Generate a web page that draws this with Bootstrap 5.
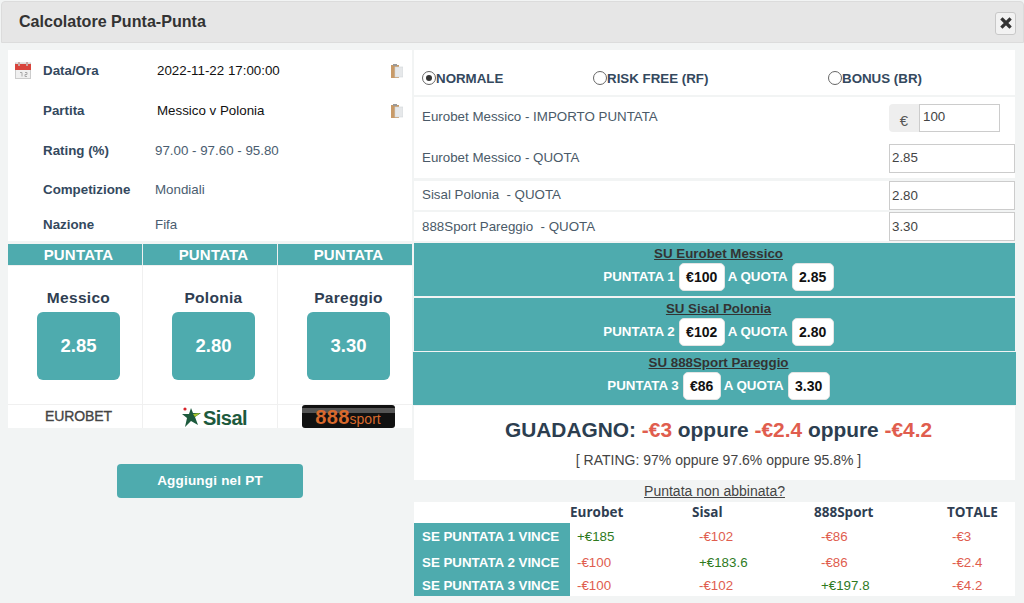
<!DOCTYPE html>
<html lang="it">
<head>
<meta charset="utf-8">
<title>Calcolatore Punta-Punta</title>
<link href="https://cdn.jsdelivr.net/npm/bootstrap@5.3.0/dist/css/bootstrap.min.css" rel="stylesheet">
<style>
html,body{height:603px;overflow:hidden}
body{background:#f2f4f4;font-family:"Liberation Sans",Arial,sans-serif;font-size:13.33px;color:#34495e;line-height:1.2}
.mhead{height:42px;margin:1px 0 0 1px;background:#e6e6e6;border:1px solid #dcdcdc;border-radius:4px 4px 0 0;padding:0 7px 0 17px}
.mhead h1{font-size:16.1px;font-weight:700;color:#333;margin:0}
.xbtn{width:21px;height:23px;padding:0;background:#f2f2f2;border:1px solid #c8c8c8;border-radius:3px;color:#333;display:flex;align-items:center;justify-content:center;margin-top:2px}
.cols{margin-top:7px;padding-left:8px;gap:2px}
.lcol{width:404px;flex:none}
.rcol{width:601px;flex:none}
.wbox{background:#fff}
.inf{display:flex;align-items:center;font-weight:700;color:#34495e;position:relative;padding-top:1px}
.inf .ik{position:absolute;left:7px;top:12px}
.inf .cp{position:absolute;left:383px;top:14px}
.inf .lb{margin-left:35px;width:112px;flex:none}
.inf .vl{font-weight:400;color:#4a5d70}
.inf .vd{font-weight:400;color:#111;margin-left:2px}
.h1r{height:40px}.h2r{height:40px}.h3r{height:41px}.h4r{height:37px}.h5r{height:33px}
.teal{background:#4eabae;color:#fff}
.pgrid{display:grid;grid-template-columns:134px 134px 134px;gap:0 1px;margin-top:3px;background:#f0f0f0}
.ph{height:21px;font-size:15px;font-weight:700;text-align:center;line-height:21px;letter-spacing:.2px;padding-left:7px}
.pb{background:#fff;height:138px;margin-top:1px;margin-bottom:1px;text-align:center;padding:23px 0 0 7px}
.pb b{display:block;font-size:15.5px;color:#2f3e52;letter-spacing:.3px;height:23px;line-height:18px}
.odd{width:83px;height:68px;margin:0 auto;border-radius:6px;font-size:18.5px;font-weight:700;display:flex;align-items:center;justify-content:center}
.pl{background:#fff;height:23px;display:flex;align-items:center;justify-content:center;overflow:hidden;padding-left:7px}
.lg1{font-size:14px;color:#444;letter-spacing:-.1px;-webkit-text-stroke:.35px #444}
.lgs{margin-left:2px}
.lg2{font-size:20px;font-weight:700;color:#1d5a3d;letter-spacing:-.5px;margin-left:1px;line-height:23px;padding-top:3px}
.lg3{width:93px;height:23px;background:linear-gradient(#111 3px,#555 3px,#555 8px,#111 8px);border-radius:3px;color:#d9692c;font-weight:700;display:flex;align-items:baseline;justify-content:center;padding-right:1px}
.lg3 b{font-size:20px;line-height:24px;letter-spacing:.3px}.lg3 i{font-style:normal;font-size:14px;font-weight:400;line-height:24px}
.addb{display:block;width:186px;height:34px;margin:36px auto 0 109px;border:0;border-radius:4px;background:#4eabae;color:#fff;font-weight:700;font-size:13.5px;letter-spacing:.2px}
.rad{height:45px;padding:12px 8px 0;font-weight:700;color:#34495e;display:flex;align-items:center}
.rad label{display:flex;align-items:center;font-size:13.33px}
.rad .ro{width:14px;height:14px;border:1px solid #666;border-radius:50%;margin:0;display:inline-flex;align-items:center;justify-content:center;background:#fff}
.rad .ro.on::after{content:"";width:6px;height:6px;background:#333;border-radius:50%}
.l1{width:171px}.l2{width:235px}
.frow{display:flex;align-items:center;justify-content:space-between;padding-left:8px;color:#4a5a68;font-size:13.33px}
.txup{margin-bottom:2px}
.finp{width:126px;height:29px;border:1px solid #ccc;background:#fff;font-size:13.33px;padding:0 2px 1px;color:#444;font-family:inherit;display:block;border-radius:0}
.eur{width:111px;height:28px;margin-right:15px}
.eur span{width:30px;background:#eee;border-radius:4px 0 0 4px;color:#555;font-size:15px;text-align:center;padding-top:8px}
.eur input{width:81px;height:28px;border:1px solid #ccc;padding:0 3px 3px;font-size:13.33px;color:#444;font-family:inherit}
.sband{height:53px;text-align:center;padding:3px 0 0 8px;font-weight:700;font-size:13.33px}
.sband u{display:block;color:#333;font-size:13.33px;height:16px;line-height:15px}
.sline{display:flex;align-items:center;justify-content:center;gap:3px;height:30px}
.chip{background:#fff;color:#111;border-radius:5px;height:28px;display:inline-flex;align-items:center;justify-content:center;border:1px solid #e4e4e4;font-size:14px}
.c1{width:46px;margin-left:1px}.c2{width:42px;margin-left:1px}.c3{width:38px;margin-left:1px}
.gain{height:74px;text-align:center;padding:10px 0 0 8px}
.gain h2{font-size:20.9px;font-weight:700;color:#2c3e50;margin:0;line-height:28px}
.neg{color:#e05d4e}.pos{color:#2e7a1e}
.gain p{font-size:14px;color:#444;margin:8px 0 0;line-height:17px}
.unm{height:22px;line-height:22px;text-align:center;color:#444;font-size:14px;text-decoration:underline}
.rtab{display:grid;grid-template-columns:156px 122px 122px 133px 68px;font-size:13.33px}
.rtab .th{font-family:"Open Sans",sans-serif;font-weight:700;font-size:13.5px;color:#2f3e52;height:21px;line-height:21px}
.rtab .rl{font-weight:700;padding-left:8px;display:flex;align-items:center}
.rtab .cv{display:flex;align-items:center;padding-left:7px}
.r1{height:27px}.r2{height:26px}.r3{height:20px}
.rtab .cl{padding-left:5px}
.wtab{height:94px}
</style>
</head>
<body>
<div class="mhead d-flex align-items-center justify-content-between">
  <h1>Calcolatore Punta-Punta</h1>
  <button class="xbtn" aria-label="Chiudi"><svg width="12" height="12" viewBox="0 0 12 12"><path d="M2.5 2.5L9.5 9.5M9.5 2.5L2.5 9.5" stroke="#333" stroke-width="3.2" stroke-linecap="square"/></svg></button>
</div>
<div class="cols d-flex">
  <div class="lcol">
    <div class="wbox">
      <div class="inf h1r"><svg class="ik" width="16" height="17" viewBox="0 0 16 17"><rect x=".5" y="1" width="15" height="15.5" fill="#f0f0f0" stroke="#ccc"/><rect x="0" y="2" width="16" height="6" fill="#d8443c"/><rect x="3" y="0" width="2" height="4" fill="#c9a7a3"/><rect x="11" y="0" width="2" height="4" fill="#c9a7a3"/><path d="M5 10.5h2v4M10 10.5h2v2h-2v2h2" fill="none" stroke="#aaa"/></svg><span class="lb">Data/Ora</span><span class="vd">2022-11-22 17:00:00</span><svg class="cp" width="12" height="14" viewBox="0 0 12 14"><rect x="0" y="1" width="8" height="13" fill="#c89a68"/><rect x="2" y="0" width="4" height="2" fill="#999"/><rect x="4" y="3" width="8" height="10" fill="#e6e8ea" stroke="#d2d6da" stroke-width=".6"/></svg></div>
      <div class="inf h2r"><span class="lb">Partita</span><span class="vd">Messico v Polonia</span><svg class="cp" width="12" height="14" viewBox="0 0 12 14"><rect x="0" y="1" width="8" height="13" fill="#c89a68"/><rect x="2" y="0" width="4" height="2" fill="#999"/><rect x="4" y="3" width="8" height="10" fill="#e6e8ea" stroke="#d2d6da" stroke-width=".6"/></svg></div>
      <div class="inf h3r"><span class="lb">Rating (%)</span><span class="vl">97.00 - 97.60 - 95.80</span></div>
      <div class="inf h4r"><span class="lb">Competizione</span><span class="vl">Mondiali</span></div>
      <div class="inf h5r"><span class="lb">Nazione</span><span class="vl">Fifa</span></div>
    </div>
    <div class="pgrid">
      <div class="ph teal">PUNTATA</div><div class="ph teal">PUNTATA</div><div class="ph teal">PUNTATA</div>
      <div class="pb"><b>Messico</b><div class="odd teal">2.85</div></div>
      <div class="pb"><b>Polonia</b><div class="odd teal">2.80</div></div>
      <div class="pb"><b>Pareggio</b><div class="odd teal">3.30</div></div>
      <div class="pl"><span class="lg1">EUROBET</span></div>
      <div class="pl"><svg class="lgs" width="20" height="22" viewBox="0 0 20 22"><circle cx="3" cy="3" r="1.6" fill="#d8232a"/><path d="M9 2l2 5 8 0-6 4 3 8-7-4-6 6 2-9-5-4 7 0z" fill="#1d5a3d"/><path d="M11 8l7-1-5 4z" fill="#a8c62c"/></svg><span class="lg2">Sisal</span></div>
      <div class="pl"><div class="lg3"><b>888</b><i>sport</i></div></div>
    </div>
    <button class="addb">Aggiungi nel PT</button>
  </div>
  <div class="rcol">
    <div class="wbox rad">
      <label class="l1"><span class="ro on"></span>NORMALE</label>
      <label class="l2"><span class="ro"></span>RISK FREE (RF)</label>
      <label><span class="ro"></span>BONUS (BR)</label>
    </div>
    <div class="wbox" style="margin-top:2px">
      <div class="frow" style="height:41px"><span class="txup">Eurobet Messico - IMPORTO PUNTATA</span><div class="eur d-flex"><span>€</span><input value="100" aria-label="Importo"></div></div>
      <div class="frow" style="height:40px"><span>Eurobet Messico - QUOTA</span><input class="finp" value="2.85" aria-label="Quota"></div>
    </div>
    <div class="wbox frow" style="height:29px;margin-top:3px"><span class="txup">Sisal Polonia&nbsp; - QUOTA</span><input class="finp" value="2.80" aria-label="Quota"></div>
    <div class="wbox frow" style="height:29px;margin-top:2px"><span>888Sport Pareggio&nbsp; - QUOTA</span><input class="finp" value="3.30" aria-label="Quota"></div>
    <div class="sband teal" style="margin-top:2px"><u>SU Eurobet Messico</u><div class="sline">PUNTATA 1 <span class="chip c1">€100</span> A QUOTA <span class="chip c2">2.85</span></div></div>
    <div class="sband teal" style="margin-top:2px"><u>SU Sisal Polonia</u><div class="sline">PUNTATA 2 <span class="chip c1">€102</span> A QUOTA <span class="chip c2">2.80</span></div></div>
    <div class="sband teal" style="margin:1px -1px 0"><u>SU 888Sport Pareggio</u><div class="sline">PUNTATA 3 <span class="chip c3">€86</span> A QUOTA <span class="chip c2">3.30</span></div></div>
    <div class="wbox gain" style="margin-top:1px">
      <h2>GUADAGNO: <span class="neg">-€3</span> oppure <span class="neg">-€2.4</span> oppure <span class="neg">-€4.2</span></h2>
      <p>[ RATING: 97% oppure 97.6% oppure 95.8% ]</p>
    </div>
    <div class="unm">Puntata non abbinata?</div>
    <div class="wbox rtab wtab">
      <div></div><div class="th">Eurobet</div><div class="th">Sisal</div><div class="th">888Sport</div><div class="th">TOTALE</div>
      <div class="rl teal r1">SE PUNTATA 1 VINCE</div><div class="cv pos r1">+€185</div><div class="cv neg r1">-€102</div><div class="cv neg r1">-€86</div><div class="cv neg cl r1">-€3</div>
      <div class="rl teal r2">SE PUNTATA 2 VINCE</div><div class="cv neg r2">-€100</div><div class="cv pos r2">+€183.6</div><div class="cv neg r2">-€86</div><div class="cv neg cl r2">-€2.4</div>
      <div class="rl teal r3">SE PUNTATA 3 VINCE</div><div class="cv neg r3">-€100</div><div class="cv neg r3">-€102</div><div class="cv pos r3">+€197.8</div><div class="cv neg cl r3">-€4.2</div>
    </div>
  </div>
</div>
<script src="https://cdn.jsdelivr.net/npm/bootstrap@5.3.0/dist/js/bootstrap.bundle.min.js"></script>
</body>
</html>
